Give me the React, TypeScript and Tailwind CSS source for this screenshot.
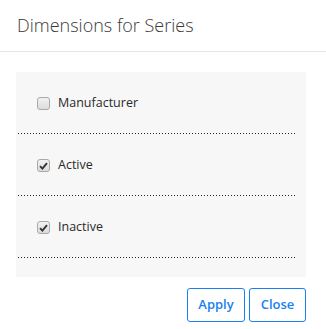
import React, { useState } from 'react';

interface Dimension {
  key: string;
  label: string;
  checked: boolean;
}

const initialDimensions: Dimension[] = [
  { key: 'manufacturer', label: 'Manufacturer', checked: false },
  { key: 'active', label: 'Active', checked: true },
  { key: 'inactive', label: 'Inactive', checked: true },
];

function CheckBox({ checked, onToggle }: { checked: boolean; onToggle: () => void }) {
  return (
    <button
      type="button"
      role="checkbox"
      aria-checked={checked}
      onClick={onToggle}
      className="flex h-[13px] w-[13px] shrink-0 items-center justify-center rounded-[3px] border border-[#a9a9a9] bg-[linear-gradient(#f2f2f2,#dcdcdc)]"
    >
      {checked && (
        <svg width="9" height="8" viewBox="0 0 9 8" aria-hidden="true">
          <path d="M1 4.2 L3.4 6.6 L8 1.2" fill="none" stroke="#333" strokeWidth="1.9" />
        </svg>
      )}
    </button>
  );
}

export default function App() {
  const [dimensions, setDimensions] = useState(initialDimensions);

  const toggle = (key: string) =>
    setDimensions((prev) => prev.map((d) => (d.key === key ? { ...d, checked: !d.checked } : d)));

  return (
    <div className="h-[329px] w-[326px] bg-white font-['Open_Sans',sans-serif] text-[#333]">
      {/* Header */}
      <div className="flex h-[52px] items-center border-b border-[#e5e5e5] px-[17px] pb-[2px]">
        <h2 className="text-[18px] font-light leading-none text-[#3a3a3a]">Dimensions for Series</h2>
      </div>

      {/* Body */}
      <div className="px-[16px] pt-[20px]">
        <div className="w-[290px] bg-[#f7f7f7] pb-[19px] pl-[2px] pr-[10px]">
          {dimensions.map((d) => (
            <div key={d.key}>
              <label className="flex h-[61px] cursor-pointer items-center gap-[8px] pl-[19px] pt-[2px] text-[12.5px] text-[#2a2a2a]">
                <CheckBox checked={d.checked} onToggle={() => toggle(d.key)} />
                <span>{d.label}</span>
              </label>
              <div className="h-px bg-[linear-gradient(to_right,#222_1px,transparent_1px)] bg-[length:3px_1px]" />
            </div>
          ))}
        </div>
      </div>

      {/* Footer */}
      <div className="flex justify-end gap-[4px] pr-[20px] pt-[11px]">
        <button className="h-[34px] w-[58px] rounded-[3px] border border-[#1a7ff0] text-[13px] font-semibold text-[#1a7ff0]">
          Apply
        </button>
        <button className="h-[34px] w-[57px] rounded-[3px] border border-[#1a7ff0] text-[13px] font-semibold text-[#1a7ff0]">
          Close
        </button>
      </div>
    </div>
  );
}
